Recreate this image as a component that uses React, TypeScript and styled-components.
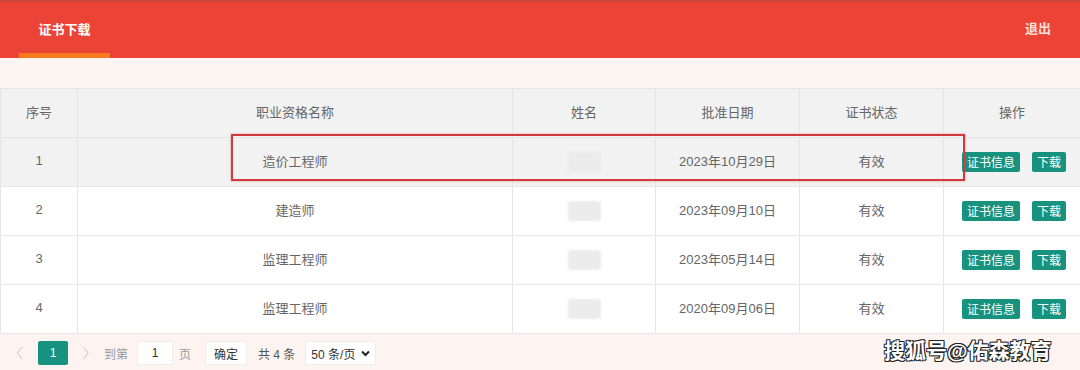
import React from "react";
import styled, { createGlobalStyle } from "styled-components";

const GlobalStyle = createGlobalStyle`
  html, body {
    margin: 0;
    padding: 0;
    background: #fcf5f2;
    font-family: "Liberation Sans", "Noto Sans CJK SC", sans-serif;
  }
`;

type Cert = { no: number; name: string; date: string; status: string };

const CERTS: Cert[] = [
  { no: 1, name: "造价工程师", date: "2023年10月29日", status: "有效" },
  { no: 2, name: "建造师", date: "2023年09月10日", status: "有效" },
  { no: 3, name: "监理工程师", date: "2023年05月14日", status: "有效" },
  { no: 4, name: "监理工程师", date: "2020年09月06日", status: "有效" }
];

const COLS = [77, 435, 143, 144, 144, 137];
const HEADS = ["序号", "职业资格名称", "姓名", "批准日期", "证书状态", "操作"];

const Page = styled.div`
  position: relative;
  width: 1080px;
  height: 370px;
  overflow: hidden;
  background: #fcf5f2;
`;

const Header = styled.header`
  display: flex;
  align-items: stretch;
  justify-content: space-between;
  height: 56px;
  background: #eb4436;
  border-top: 2px solid #c8473c;
  padding: 0 29px 0 19px;
`;

const Tab = styled.div`
  display: flex;
  align-items: center;
  justify-content: center;
  width: 91px;
  padding-top: 2px;
  box-sizing: border-box;
  color: #fff;
  font-size: 13px;
  font-weight: bold;
  border-bottom: 5px solid #f77a1c;
`;

const Logout = styled.div`
  display: flex;
  align-items: center;
  padding-bottom: 5px;
  color: #fde0dc;
  font-size: 13px;
  font-weight: bold;
`;

const Gap = styled.div`
  height: 30px;
`;

const Table = styled.table`
  width: 1080px;
  border-collapse: collapse;
  table-layout: fixed;
  font-size: 13px;
  color: #666;
`;

const HeadCell = styled.th`
  height: 49px;
  background: #f2f2f2;
  border: 1px solid #e6e6e6;
  font-weight: normal;
  color: #666;
  padding: 0 0 4px;
  box-sizing: border-box;
`;

const Row = styled.tr<{ $hover: boolean }>`
  background: ${(p) => (p.$hover ? "#f2f2f2" : "#fff")};
`;

const Cell = styled.td`
  height: 49px;
  border: 1px solid #e6e6e6;
  text-align: center;
  padding: 0 0 3px;
  box-sizing: border-box;
`;

const Blur = styled.span`
  display: inline-block;
  width: 33px;
  height: 20px;
  margin-top: 3px;
  border-radius: 3px;
  background: #ececec;
  filter: blur(1px);
  vertical-align: middle;
`;

const Actions = styled.div`
  display: flex;
  justify-content: flex-end;
  gap: 12px;
  padding: 2px 14px 0 0;
`;

const Btn = styled.span`
  display: inline-flex;
  align-items: center;
  height: 20px;
  padding: 0 5px;
  border-radius: 2px;
  background: #16927f;
  color: #fff;
  font-size: 12px;
`;

const Pager = styled.div`
  display: flex;
  align-items: center;
  height: 38px;
  padding-left: 8px;
  background: #fdf4f1;
  font-size: 12px;
  color: #999;
`;

const Arrow = styled.span`
  display: inline-flex;
  justify-content: center;
  width: 24px;
`;

const Current = styled.span`
  display: inline-flex;
  align-items: center;
  justify-content: center;
  width: 30px;
  height: 24px;
  margin: 0 6px;
  border-radius: 2px;
  background: #16927f;
  color: #fff;
  font-size: 12px;
`;

const Label = styled.span<{ $dark?: boolean; $left?: number; $right?: number }>`
  margin: 0 ${(p) => p.$right ?? 10}px 0 ${(p) => p.$left ?? 6}px;
  color: ${(p) => (p.$dark ? "#555" : "#999")};
`;

const Box = styled.span<{ $w: number }>`
  display: inline-flex;
  align-items: center;
  justify-content: center;
  gap: 6px;
  width: ${(p) => p.$w}px;
  height: 24px;
  box-sizing: border-box;
  border: 1px solid #eee;
  border-radius: 2px;
  background: #fff;
  color: #333;
  font-size: 12px;
`;

const Highlight = styled.div`
  position: absolute;
  left: 231px;
  top: 134px;
  width: 734px;
  height: 47px;
  box-sizing: border-box;
  border: 2px solid #d2393f;
  box-shadow: 0 0 2px rgba(230, 80, 80, 0.6);
  pointer-events: none;
`;

const Watermark = styled.div`
  position: absolute;
  left: 884px;
  top: 334px;
  color: #fff;
  font-size: 21px;
  font-weight: bold;
  text-shadow: 1px 1px 0 #222, -1px -1px 0 #222, 1px -1px 0 #222, -1px 1px 0 #222;
`;

function Chevron({ dir }: { dir: "left" | "right" }) {
  const d = dir === "left" ? "M6 1 L1.5 7 L6 13" : "M1.5 1 L6 7 L1.5 13";
  return (
    <svg width="8" height="14" viewBox="0 0 8 14">
      <path d={d} stroke="#d0d0d0" strokeWidth="1.2" fill="none" />
    </svg>
  );
}

export default function App() {
  return (
    <Page>
      <GlobalStyle />
      <Header>
        <Tab>证书下载</Tab>
        <Logout>退出</Logout>
      </Header>
      <Gap />
      <Table>
        <colgroup>
          {COLS.map((w, i) => (
            <col key={i} style={{ width: w }} />
          ))}
        </colgroup>
        <thead>
          <tr>
            {HEADS.map((h) => (
              <HeadCell key={h}>{h}</HeadCell>
            ))}
          </tr>
        </thead>
        <tbody>
          {CERTS.map((c) => (
            <Row key={c.no} $hover={c.no === 1}>
              <Cell>{c.no}</Cell>
              <Cell>{c.name}</Cell>
              <Cell>
                <Blur />
              </Cell>
              <Cell>{c.date}</Cell>
              <Cell>{c.status}</Cell>
              <Cell>
                <Actions>
                  <Btn>证书信息</Btn>
                  <Btn>下载</Btn>
                </Actions>
              </Cell>
            </Row>
          ))}
        </tbody>
      </Table>
      <Pager>
        <Arrow>
          <Chevron dir="left" />
        </Arrow>
        <Current>1</Current>
        <Arrow>
          <Chevron dir="right" />
        </Arrow>
        <Label $right={9}>到第</Label>
        <Box $w={36}>1</Box>
        <Label $right={14}>页</Label>
        <Box $w={42}>确定</Box>
        <Label $dark $left={11}>共 4 条</Label>
        <Box $w={71}>
          50 条/页
          <svg width="9" height="7" viewBox="0 0 9 7">
            <path d="M1 1.5 L4.5 5 L8 1.5" stroke="#222" strokeWidth="2" fill="none" />
          </svg>
        </Box>
      </Pager>
      <Highlight />
      <Watermark>搜狐号@佑森教育</Watermark>
    </Page>
  );
}
